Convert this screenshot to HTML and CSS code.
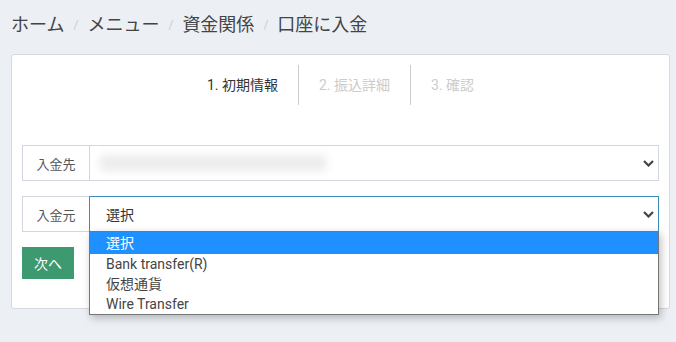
FILE: index.html
```html
<!DOCTYPE html>
<html lang="ja">
<head>
    <meta charset="UTF-8">
    <title>口座に入金</title>
    <link rel="stylesheet" href="styles.css">
</head>
<body>
    <ol class="breadcrumb">
        <li>ホーム</li>
        <li class="sep">/</li>
        <li>メニュー</li>
        <li class="sep">/</li>
        <li>資金関係</li>
        <li class="sep">/</li>
        <li>口座に入金</li>
    </ol>

    <div class="box">
        <div class="steps">
            <div class="step active">1. 初期情報</div>
            <div class="step">2. 振込詳細</div>
            <div class="step">3. 確認</div>
        </div>

        <div class="input-group">
            <div class="addon">入金先</div>
            <div class="select">
                <span class="blurred"></span>
                <svg class="caret" width="11" height="7" viewBox="0 0 11 7"><polyline points="1,1 5.5,5.5 10,1" fill="none" stroke="#444" stroke-width="2.2"/></svg>
            </div>
        </div>

        <div class="input-group">
            <div class="addon">入金元</div>
            <div class="select focus">
                <span class="value">選択</span>
                <svg class="caret" width="11" height="7" viewBox="0 0 11 7"><polyline points="1,1 5.5,5.5 10,1" fill="none" stroke="#444" stroke-width="2.2"/></svg>
                <ul class="dropdown">
                    <li class="selected">選択</li>
                    <li>Bank transfer(R)</li>
                    <li>仮想通貨</li>
                    <li>Wire Transfer</li>
                </ul>
            </div>
        </div>

        <button class="btn-next">次へ</button>
    </div>
</body>
</html>
```

FILE: styles.css
```css
html {
    background-color: #ecf0f5;
}

body {
    margin: 0;
    min-height: 342px;
    background-color: #ecf0f5;
    font-family: Roboto, "Noto Sans CJK JP", sans-serif;
    color: #333;
}

.breadcrumb {
    list-style: none;
    margin: 0 0 16px 0;
    padding: 12px 11px 0;
    display: flex;
    align-items: center;
    font-size: 18px;
    line-height: 26px;
    color: #444;
}

.breadcrumb .sep {
    font-size: 12px;
    color: #ccc;
    padding: 0 9px;
}

.box {
    position: relative;
    width: 659px;
    margin-left: 11px;
    box-sizing: border-box;
    background-color: #fff;
    border: 1px solid #d6dae0;
    border-radius: 3px;
    padding: 10px 10px 29px;
}

.steps {
    display: flex;
    justify-content: center;
    height: 40px;
    margin-bottom: 40px;
}

.step {
    padding: 0 20px;
    line-height: 40px;
    font-size: 14px;
    color: #ccc;
    border-right: 1px solid #ccc;
}

.step:last-child {
    border-right: none;
}

.step.active {
    color: #333;
}

.input-group {
    display: flex;
    height: 36px;
    margin-bottom: 15px;
}

.addon {
    width: 67px;
    box-sizing: border-box;
    border: 1px solid #d2d6de;
    border-right: none;
    font-size: 13px;
    color: #555;
    display: flex;
    align-items: center;
    justify-content: center;
}

.select {
    flex: 1;
    position: relative;
    border: 1px solid #d2d6de;
    display: flex;
    align-items: center;
    padding: 0 4px 0 16px;
    font-size: 14px;
}

.select.focus {
    border-color: #3c8dbc;
}

.blurred {
    width: 226px;
    height: 16px;
    margin-left: -6px;
    background-color: #ececec;
    filter: blur(4px);
}

.caret {
    margin-left: auto;
}

.dropdown {
    position: absolute;
    top: 100%;
    left: -1px;
    right: -1px;
    margin: 0;
    padding: 0;
    list-style: none;
    background-color: #fff;
    border: 1px solid #767676;
    box-shadow: 2px 3px 8px rgba(0, 0, 0, 0.25);
    font-size: 14px;
    color: #444;
    z-index: 10;
}

.dropdown li {
    height: 20px;
    line-height: 20px;
    padding-left: 16px;
}

.dropdown li.selected {
    height: 22px;
    line-height: 22px;
    background-color: #1e90ff;
    color: #fff;
}

.btn-next {
    width: 52px;
    height: 32px;
    border: none;
    background-color: #3d9970;
    color: #fff;
    font-size: 14px;
    font-family: Roboto, "Noto Sans CJK JP", sans-serif;
    padding: 0;
    cursor: pointer;
}
```
